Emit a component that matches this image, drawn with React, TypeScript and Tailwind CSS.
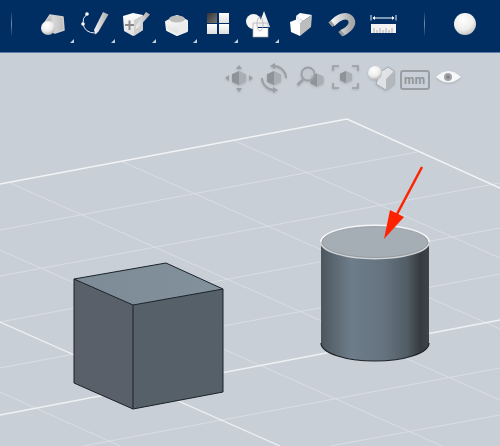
import type { ReactNode } from "react";

// toolbar cells are 41px wide, icons are drawn in page coordinates via the viewBox
const CELL = 41;
const FIRST_CELL = 33;

const minorLines = [
  [0, 230, 417, 152],
  [0, 276, 500, 183],
  [0, 322, 500, 228],
  [0, 368, 500, 274],
  [83, 446, 500, 368],
  [330, 446, 500, 415],
  [235, 141, 500, 258],
  [123, 162, 500, 329],
  [10, 183, 500, 400],
  [0, 250, 442, 446],
  [0, 392, 120, 446]
];

function Defs() {
  return (
    <svg className="absolute h-0 w-0" aria-hidden="true">
      <defs>
        <linearGradient id="metal" x1="0" y1="0" x2="1" y2="1">
          <stop offset="0" stopColor="#ffffff" />
          <stop offset="1" stopColor="#b4b4b4" />
        </linearGradient>
        <linearGradient id="shade" x1="0" y1="0" x2="1" y2="0">
          <stop offset="0" stopColor="#f4f4f4" />
          <stop offset="1" stopColor="#a8a8a8" />
        </linearGradient>
        <linearGradient id="boxShade" x1="0" y1="0" x2="1" y2="0">
          <stop offset="0" stopColor="#8f8f8f" />
          <stop offset="0.45" stopColor="#d8d8d8" />
          <stop offset="1" stopColor="#bdbdbd" />
        </linearGradient>
        <linearGradient id="tile" x1="0" y1="0" x2="0" y2="1">
          <stop offset="0" stopColor="#ffffff" />
          <stop offset="1" stopColor="#dedede" />
        </linearGradient>
        <linearGradient id="darkTile" x1="0" y1="0" x2="1" y2="1">
          <stop offset="0" stopColor="#333333" />
          <stop offset="1" stopColor="#777777" />
        </linearGradient>
        <radialGradient id="ball" cx="0.4" cy="0.3" r="0.8">
          <stop offset="0" stopColor="#ffffff" />
          <stop offset="0.55" stopColor="#ededed" />
          <stop offset="1" stopColor="#a0a0a0" />
        </radialGradient>
        <linearGradient id="barrel" x1="0" y1="0" x2="1" y2="0">
          <stop offset="0" stopColor="#4b555c" />
          <stop offset="0.08" stopColor="#56626b" />
          <stop offset="0.28" stopColor="#6e7d8a" />
          <stop offset="0.6" stopColor="#64727e" />
          <stop offset="0.8" stopColor="#515c64" />
          <stop offset="0.92" stopColor="#363b3f" />
          <stop offset="1" stopColor="#3e4449" />
        </linearGradient>
        <linearGradient id="topFace" x1="0" y1="0" x2="1" y2="0">
          <stop offset="0" stopColor="#7c8b96" />
          <stop offset="1" stopColor="#82919c" />
        </linearGradient>
        <linearGradient id="divider" x1="0" y1="0" x2="0" y2="1">
          <stop offset="0" stopColor="#002e62" />
          <stop offset="0.5" stopColor="#6f8bac" />
          <stop offset="1" stopColor="#002e62" />
        </linearGradient>
      </defs>
    </svg>
  );
}

function ToolIcon({ index, menu, children }: { index: number; menu?: boolean; children: ReactNode }) {
  const left = FIRST_CELL + CELL * index;
  return (
    <div className="relative h-[52px] w-[41px] shrink-0">
      <svg className="block h-[52px] w-[41px] overflow-visible blur-[0.35px]" viewBox={`${left} 0 41 52`}>
        {children}
      </svg>
      {menu ? (
        <span className="absolute right-0 top-[39px] h-0 w-0 border-b-[4px] border-l-[4px] border-b-[#c4d0de] border-l-transparent" />
      ) : null}
    </div>
  );
}

function Divider({ className }: { className: string }) {
  return (
    <svg className={className} width="1" height="26" viewBox="0 0 1 26">
      <rect width="1" height="26" fill="url(#divider)" />
    </svg>
  );
}

function ViewIcon({ index, children }: { index: number; children: ReactNode }) {
  const left = 222 + 35 * index;
  return (
    <svg
      className="block h-[34px] w-[35px] shrink-0 overflow-visible blur-[0.5px] drop-shadow-[0_1px_1px_rgba(0,0,0,0.15)]"
      viewBox={`${left} 61 35 34`}
    >
      {children}
    </svg>
  );
}

function Hex({ x, y, r = 6 }: { x: number; y: number; r?: number }) {
  return (
    <g>
      <polygon
        points={`${x},${y - r} ${x + r},${y - r * 0.55} ${x + r},${y + r * 0.55} ${x},${y + r} ${x - r},${y + r * 0.55} ${x - r},${y - r * 0.55}`}
        fill="#a9aeb4"
      />
      <polygon points={`${x},${y - r} ${x},${y + r} ${x - r},${y + r * 0.55} ${x - r},${y - r * 0.55}`} fill="#8e9399" />
    </g>
  );
}

export default function App() {
  return (
    <div className="relative flex h-[446px] w-[500px] flex-col overflow-hidden bg-[#c8cfd7]">
      <Defs />
      <div className="flex h-[52px] shrink-0 items-center bg-[#002e62] shadow-[0_1px_0_#5d7ea8]">
        <Divider className="ml-[11px] mr-[21px] block shrink-0 -translate-y-[2px]" />

        <ToolIcon index={0} menu>
          <polygon
            points="50,15 63,17 64,30 55,33 47,30 44,24"
            fill="url(#boxShade)"
            stroke="#cfcfcf"
            strokeWidth="1.5"
            strokeLinejoin="round"
          />
          <circle cx="48" cy="28" r="7" fill="url(#ball)" />
        </ToolIcon>

        <ToolIcon index={1} menu>
          <path d="M87 14 Q82 18 83 24 Q85 33 95 33" fill="none" stroke="#e4eaf0" strokeWidth="1" />
          <circle cx="87" cy="14" r="1.8" fill="#ffffff" />
          <circle cx="83" cy="24" r="1.8" fill="#ffffff" />
          <polygon points="103,12 108.5,14.5 98.5,31.5 95.5,34.5 94,30" fill="url(#shade)" />
        </ToolIcon>

        <ToolIcon index={2} menu>
          <polygon points="123,16 133,13 143,15 143,30 133,36 124,31" fill="url(#tile)" />
          <polygon points="134,20 143,15 143,30 134,36" fill="#cfcfcf" />
          <path d="M125 25 H134 M129.5 20.5 V30" stroke="#8b8b8b" strokeWidth="2" />
          <polygon points="146,12 150,14.5 139,27 135.5,29 136.5,25" fill="url(#shade)" />
        </ToolIcon>

        <ToolIcon index={3} menu>
          <polygon
            points="166,22 177,16 187,21 187,31 177,35 167,30"
            fill="url(#tile)"
            stroke="#f2f2f2"
            strokeWidth="2"
            strokeLinejoin="round"
          />
          <ellipse cx="177" cy="19" rx="8" ry="3.5" fill="#bdbdbd" />
          <polygon points="178,24 187,21 187,31 178,35" fill="#ececec" />
        </ToolIcon>

        <ToolIcon index={4} menu>
          <rect x="207" y="13" width="10" height="10" fill="url(#darkTile)" />
          <rect x="219" y="13" width="10" height="10" fill="url(#tile)" />
          <rect x="207" y="24" width="10" height="10" fill="url(#tile)" />
          <rect x="219" y="24" width="10" height="10" fill="url(#tile)" />
        </ToolIcon>

        <ToolIcon index={5} menu>
          <circle cx="253.5" cy="21.5" r="7.5" fill="#f6f6f6" />
          <polygon points="264,11 270,27 258,27" fill="#f0f0f0" />
          <rect x="253" y="28" width="15" height="9" fill="#ffffff" />
          <rect x="253" y="23" width="15" height="14" fill="none" stroke="#a9a9a9" strokeWidth="0.7" />
          <ellipse cx="260" cy="24" rx="3" ry="7" fill="none" stroke="#a9a9a9" strokeWidth="0.7" />
        </ToolIcon>

        <ToolIcon index={6}>
          <polygon points="290,22 300,18 300,36 291,32" fill="#ffffff" />
          <polygon points="296,16 300,13 312,15 303,21" fill="#ffffff" />
          <polygon points="303,21 312,15 311,27 300,36 300,24" fill="#bdbdbd" />
          <polygon points="296,16 303,21 300,24 296,21" fill="#f4f4f4" />
        </ToolIcon>

        <ToolIcon index={7}>
          <path d="M332 24 C338 17 346 14 350 18 C354 22 352 28 342 33" fill="none" stroke="url(#shade)" strokeWidth="6.5" />
          <path d="M329.5 21.5 L333.5 26 M339.5 31 L343.5 35.5" stroke="#9a9a9a" strokeWidth="3" />
        </ToolIcon>

        <ToolIcon index={8}>
          <path d="M371 15 V20.5 M396 15 V20.5" stroke="#dfe6ee" strokeWidth="1" />
          <path d="M373 18 H394" stroke="#ffffff" strokeWidth="1" />
          <path d="M375 16 L372.5 18 L375 20 Z M392 16 L394.5 18 L392 20 Z" fill="#ffffff" />
          <rect x="371" y="24" width="25" height="9" fill="#f2f2f2" />
          <path d="M374 33 V28 M377 33 V30 M380 33 V28 M383 33 V30 M386 33 V28 M389 33 V30 M392 33 V28" stroke="#9c9c9c" strokeWidth="0.8" />
        </ToolIcon>

        <Divider className="ml-[22px] mr-[29px] block shrink-0 -translate-y-[2px]" />
        <div className="h-[22px] w-[22px] -translate-y-[2px] rounded-full bg-[radial-gradient(circle_at_40%_30%,#ffffff_0%,#eeeeee_50%,#a3a3a3_100%)]" />
      </div>

      <div className="relative flex-1">
        <svg className="block h-[394px] w-[500px]" viewBox="0 52 500 394">
          {minorLines.map(([x1, y1, x2, y2]) => (
            <line key={`${x1}-${y1}`} x1={x1} y1={y1} x2={x2} y2={y2} stroke="#dae0e5" strokeWidth="0.9" />
          ))}
          <path d="M0 184 L347 119 L500 188" fill="none" stroke="#f2f4f6" strokeWidth="1.4" />
          <line x1="0" y1="415" x2="500" y2="320" stroke="#eef1f4" strokeWidth="1.3" />
          <line x1="0" y1="322" x2="280" y2="446" stroke="#eef1f4" strokeWidth="1.3" />

          {/* cube */}
          <polygon points="74,279 166,263 223,289 133,305" fill="url(#topFace)" />
          <polygon points="74,279 133,305 133,409 74,383" fill="#5a6069" />
          <polygon points="133,305 223,289 223,392 133,409" fill="#566069" />
          <path
            d="M74 279 L166 263 L223 289 L223 392 L133 409 L74 383 Z M74 279 L133 305 L223 289 M133 305 V409"
            fill="none"
            stroke="#1b2127"
            strokeWidth="1"
            strokeLinejoin="round"
          />

          {/* cylinder */}
          <path d="M321 241 V343 A54 18 0 0 0 429 343 V241 Z" fill="url(#barrel)" />
          <path d="M321 343 A54 18 0 0 0 429 343" fill="none" stroke="#1e2225" strokeWidth="1.2" />
          <ellipse cx="375" cy="242" rx="54" ry="16.5" fill="#a6aeb5" stroke="#cfd3d6" strokeWidth="2" />
          <path d="M321 242 A54 16.5 0 0 1 429 242" fill="none" stroke="#f4f5f6" strokeWidth="2" />
          <ellipse cx="375" cy="242" rx="53" ry="15.5" fill="none" stroke="#858c92" strokeWidth="0.7" />

          {/* arrow */}
          <line x1="422" y1="167" x2="396" y2="216" stroke="#ff2200" strokeWidth="2.5" />
          <polygon points="384,239 390,210 404,217" fill="#ff2200" />
        </svg>

        <div className="absolute left-[222px] top-[9px] flex items-start">
          <ViewIcon index={0}>
            <Hex x={239} y={78} r={7} />
            <polygon points="239,65 236,69 242,69" fill="#9a9fa5" />
            <polygon points="239,92 236,88 242,88" fill="#9a9fa5" />
            <polygon points="225,78 229,75 229,81" fill="#9a9fa5" />
            <polygon points="253,78 249,75 249,81" fill="#9a9fa5" />
          </ViewIcon>
          <ViewIcon index={1}>
            <Hex x={274} y={78} r={7} />
            <path d="M272 66 A12.5 12.5 0 0 1 286 78 M276 90 A12.5 12.5 0 0 1 262 78" fill="none" stroke="#9a9fa5" strokeWidth="2" />
            <polygon points="270,66 275,63 275,69" fill="#9a9fa5" />
            <polygon points="278,90 273,87 273,93" fill="#9a9fa5" />
          </ViewIcon>
          <ViewIcon index={2}>
            <Hex x={317} y={80} r={6.5} />
            <circle cx="308" cy="74" r="6.5" fill="#c8cfd7" fillOpacity="0.6" stroke="#9a9fa5" strokeWidth="1.8" />
            <line x1="303" y1="79.5" x2="297.5" y2="85" stroke="#9a9fa5" strokeWidth="2.5" />
          </ViewIcon>
          <ViewIcon index={3}>
            <Hex x={346} y={77} r={6} />
            <path d="M333 71 V66 H339 M352 66 H358 V71 M358 83 V88 H352 M339 88 H333 V83" fill="none" stroke="#9a9fa5" strokeWidth="1.6" />
          </ViewIcon>
          <ViewIcon index={4}>
            <polygon points="380,72 388,67 394,71 394,84 386,90 376,84" fill="#dfe3e7" stroke="#a4a9ae" strokeWidth="1" />
            <polygon points="386,79 394,71 394,84 386,90" fill="#b3b8bd" />
            <circle cx="375" cy="73" r="7" fill="url(#ball)" />
          </ViewIcon>
          <div className="flex h-[34px] w-[35px] shrink-0 items-center justify-center">
            <span className="mt-[4px] flex h-[20px] w-[30px] items-center justify-center rounded-[3px] border-2 border-[#999ea4] font-['Liberation_Sans',sans-serif] text-[12px] font-bold leading-none text-[#8f9499]">
              mm
            </span>
          </div>
          <ViewIcon index={6}>
            <path d="M436 77 Q448 65 461 77 Q448 88 436 77 Z" fill="#f6f7f8" />
            <circle cx="448" cy="77" r="4" fill="#a2a4a8" />
            <circle cx="448" cy="77" r="1.8" fill="#7d8086" />
          </ViewIcon>
        </div>
      </div>
    </div>
  );
}
